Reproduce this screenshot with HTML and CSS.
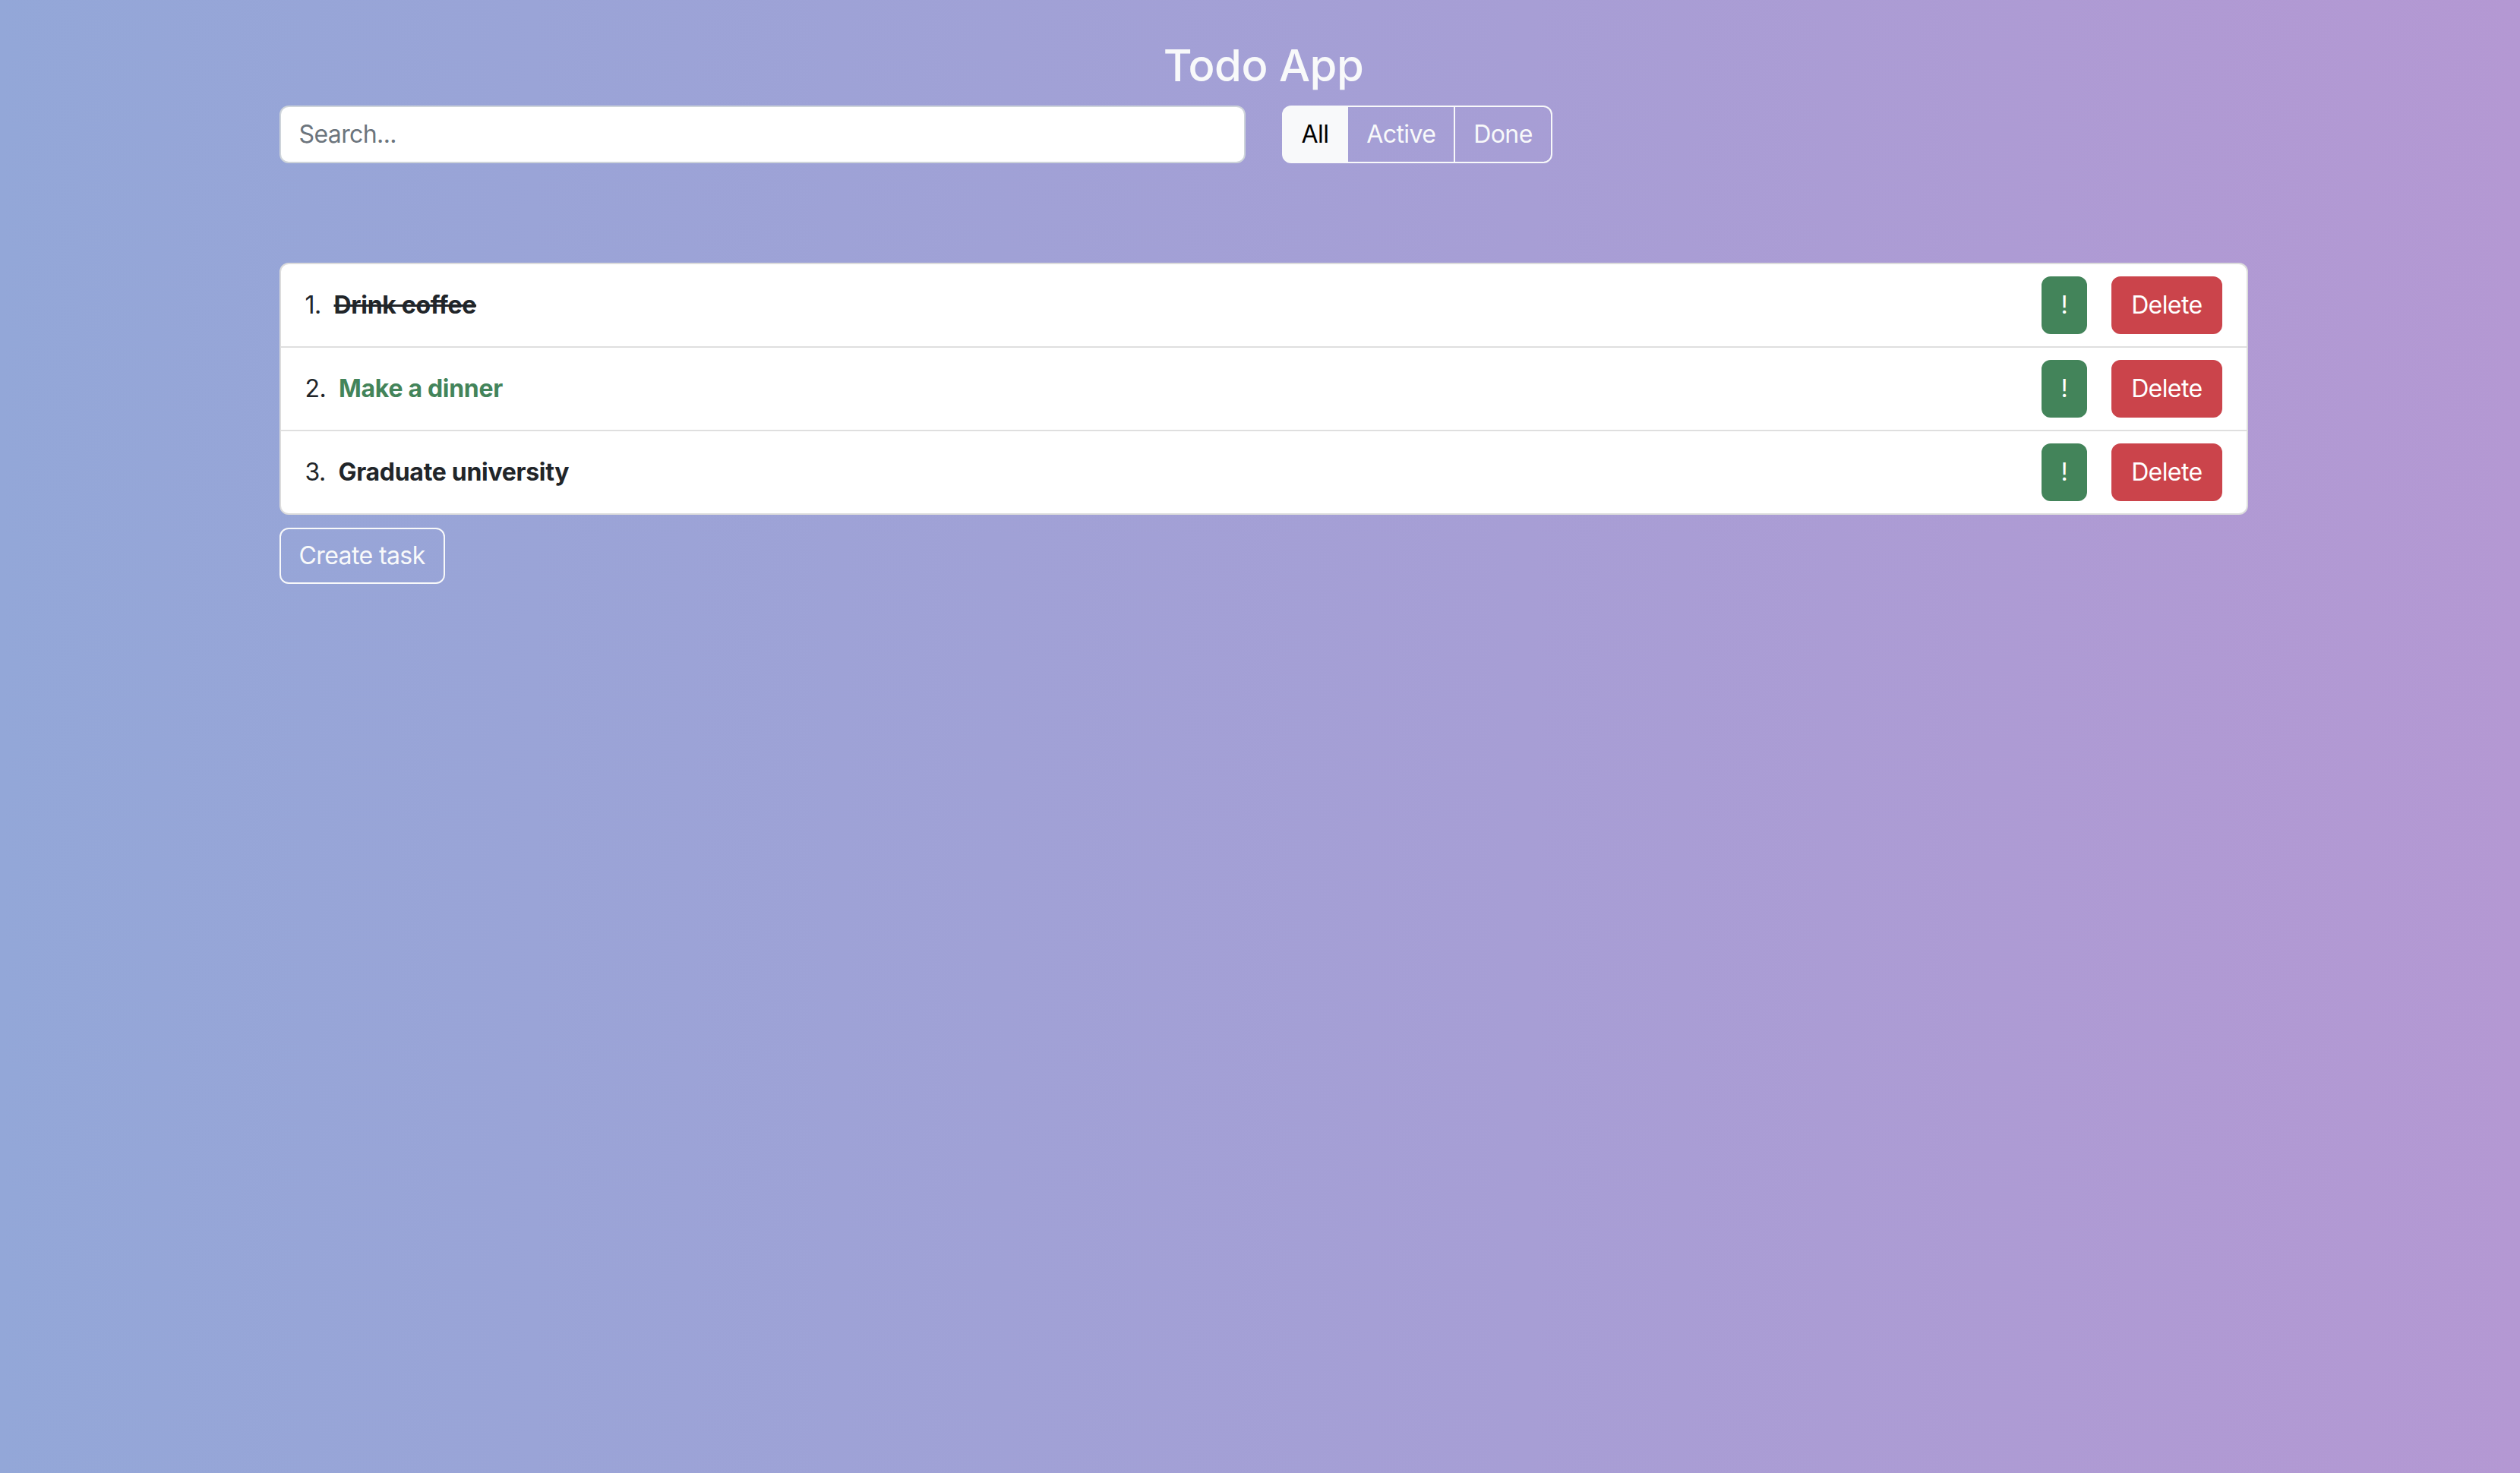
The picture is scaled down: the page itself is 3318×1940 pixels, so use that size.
FILE: index.html
```html
<!DOCTYPE html>
<html lang="en">
<head>
<meta charset="utf-8">
<title>Todo App</title>
<link rel="stylesheet" href="styles.css">
</head>
<body>
  <div class="container">
    <h2 class="title">Todo App</h2>
    <div class="toolbar">
      <input class="search" type="text" placeholder="Search...">
      <div class="filters">
        <button class="filter filter-active">All</button>
        <button class="filter">Active</button>
        <button class="filter">Done</button>
      </div>
    </div>
    <ul class="tasks">
      <li class="task">
        <span class="task-label"><span class="num">1.</span><span class="name name-done">Drink coffee</span></span>
        <span class="actions"><button class="btn btn-important">!</button><button class="btn btn-delete">Delete</button></span>
      </li>
      <li class="task">
        <span class="task-label"><span class="num">2.</span><span class="name name-important">Make a dinner</span></span>
        <span class="actions"><button class="btn btn-important">!</button><button class="btn btn-delete">Delete</button></span>
      </li>
      <li class="task">
        <span class="task-label"><span class="num">3.</span><span class="name">Graduate university</span></span>
        <span class="actions"><button class="btn btn-important">!</button><button class="btn btn-delete">Delete</button></span>
      </li>
    </ul>
    <button class="create">Create task</button>
  </div>
</body>
</html>
```

FILE: styles.css
```css
* { box-sizing: border-box; }

html, body {
  margin: 0;
  min-height: 100%;
}

body {
  min-height: 1940px;
  padding-left: 9px;
  background: linear-gradient(to right, #93a7d8 0%, #b498d3 100%);
  font-family: Inter, "Noto Sans", sans-serif;
  font-size: 32px;
  line-height: 1.5;
  letter-spacing: -0.6px;
  color: #212529;
}

.container {
  width: 2592px;
  margin: 0 auto;
}

.title {
  margin: 0 0 17px;
  padding-top: 52px;
  text-align: center;
  font-size: 58px;
  font-weight: 500;
  line-height: 1.2;
  letter-spacing: -0.5px;
  color: #f8f9fa;
}

.toolbar {
  display: flex;
  align-items: center;
  gap: 48px;
}

.search {
  width: 1272px;
  height: 76px;
  padding: 12px 24px;
  border: 2px solid #ced4da;
  border-radius: 12px;
  background: #fff;
  font: inherit;
  letter-spacing: inherit;
  color: #212529;
  outline: none;
}

.search::placeholder { color: #6c757d; }

.filters {
  display: flex;
}

.filter {
  height: 76px;
  padding: 12px 24px;
  border: 2px solid #f8f9fa;
  background: transparent;
  font: inherit;
  letter-spacing: inherit;
  color: #f8f9fa;
  border-radius: 0;
  margin-left: -2px;
}

.filter:first-child {
  margin-left: 0;
  border-radius: 12px 0 0 12px;
}

.filter:last-child {
  border-radius: 0 12px 12px 0;
}

.filter-active {
  background: #f8f9fa;
  color: #000;
}

.tasks {
  list-style: none;
  margin: 131px 0 0;
  padding: 0;
  background: #fff;
  border: 2px solid #dcdcdc;
  border-radius: 12px;
}

.task {
  display: flex;
  align-items: center;
  justify-content: space-between;
  padding: 16px 32px 16px 32px;
  border-top: 2px solid #dfdfdf;
}

.task:first-child { border-top: none; }

.task-label {
  display: flex;
  align-items: baseline;
}

.num { margin-right: 17px; }

.name {
  font-weight: 700;
  letter-spacing: -0.3px;
}

.name-done { text-decoration: line-through; }

.name-important { color: #43845a; }

.actions {
  display: flex;
  gap: 32px;
}

.btn {
  height: 76px;
  padding: 12px 24px;
  border: 2px solid transparent;
  border-radius: 12px;
  font: inherit;
  letter-spacing: inherit;
  color: #fff;
}

.btn-important {
  background: #43845a;
  border-color: #43845a;
}

.btn-delete {
  background: #cb444b;
  border-color: #cb444b;
}

.create {
  margin-top: 17px;
  height: 74px;
  padding: 11px 24px;
  border: 2px solid #f8f9fa;
  border-radius: 12px;
  background: transparent;
  font: inherit;
  letter-spacing: inherit;
  color: #f8f9fa;
}
```
